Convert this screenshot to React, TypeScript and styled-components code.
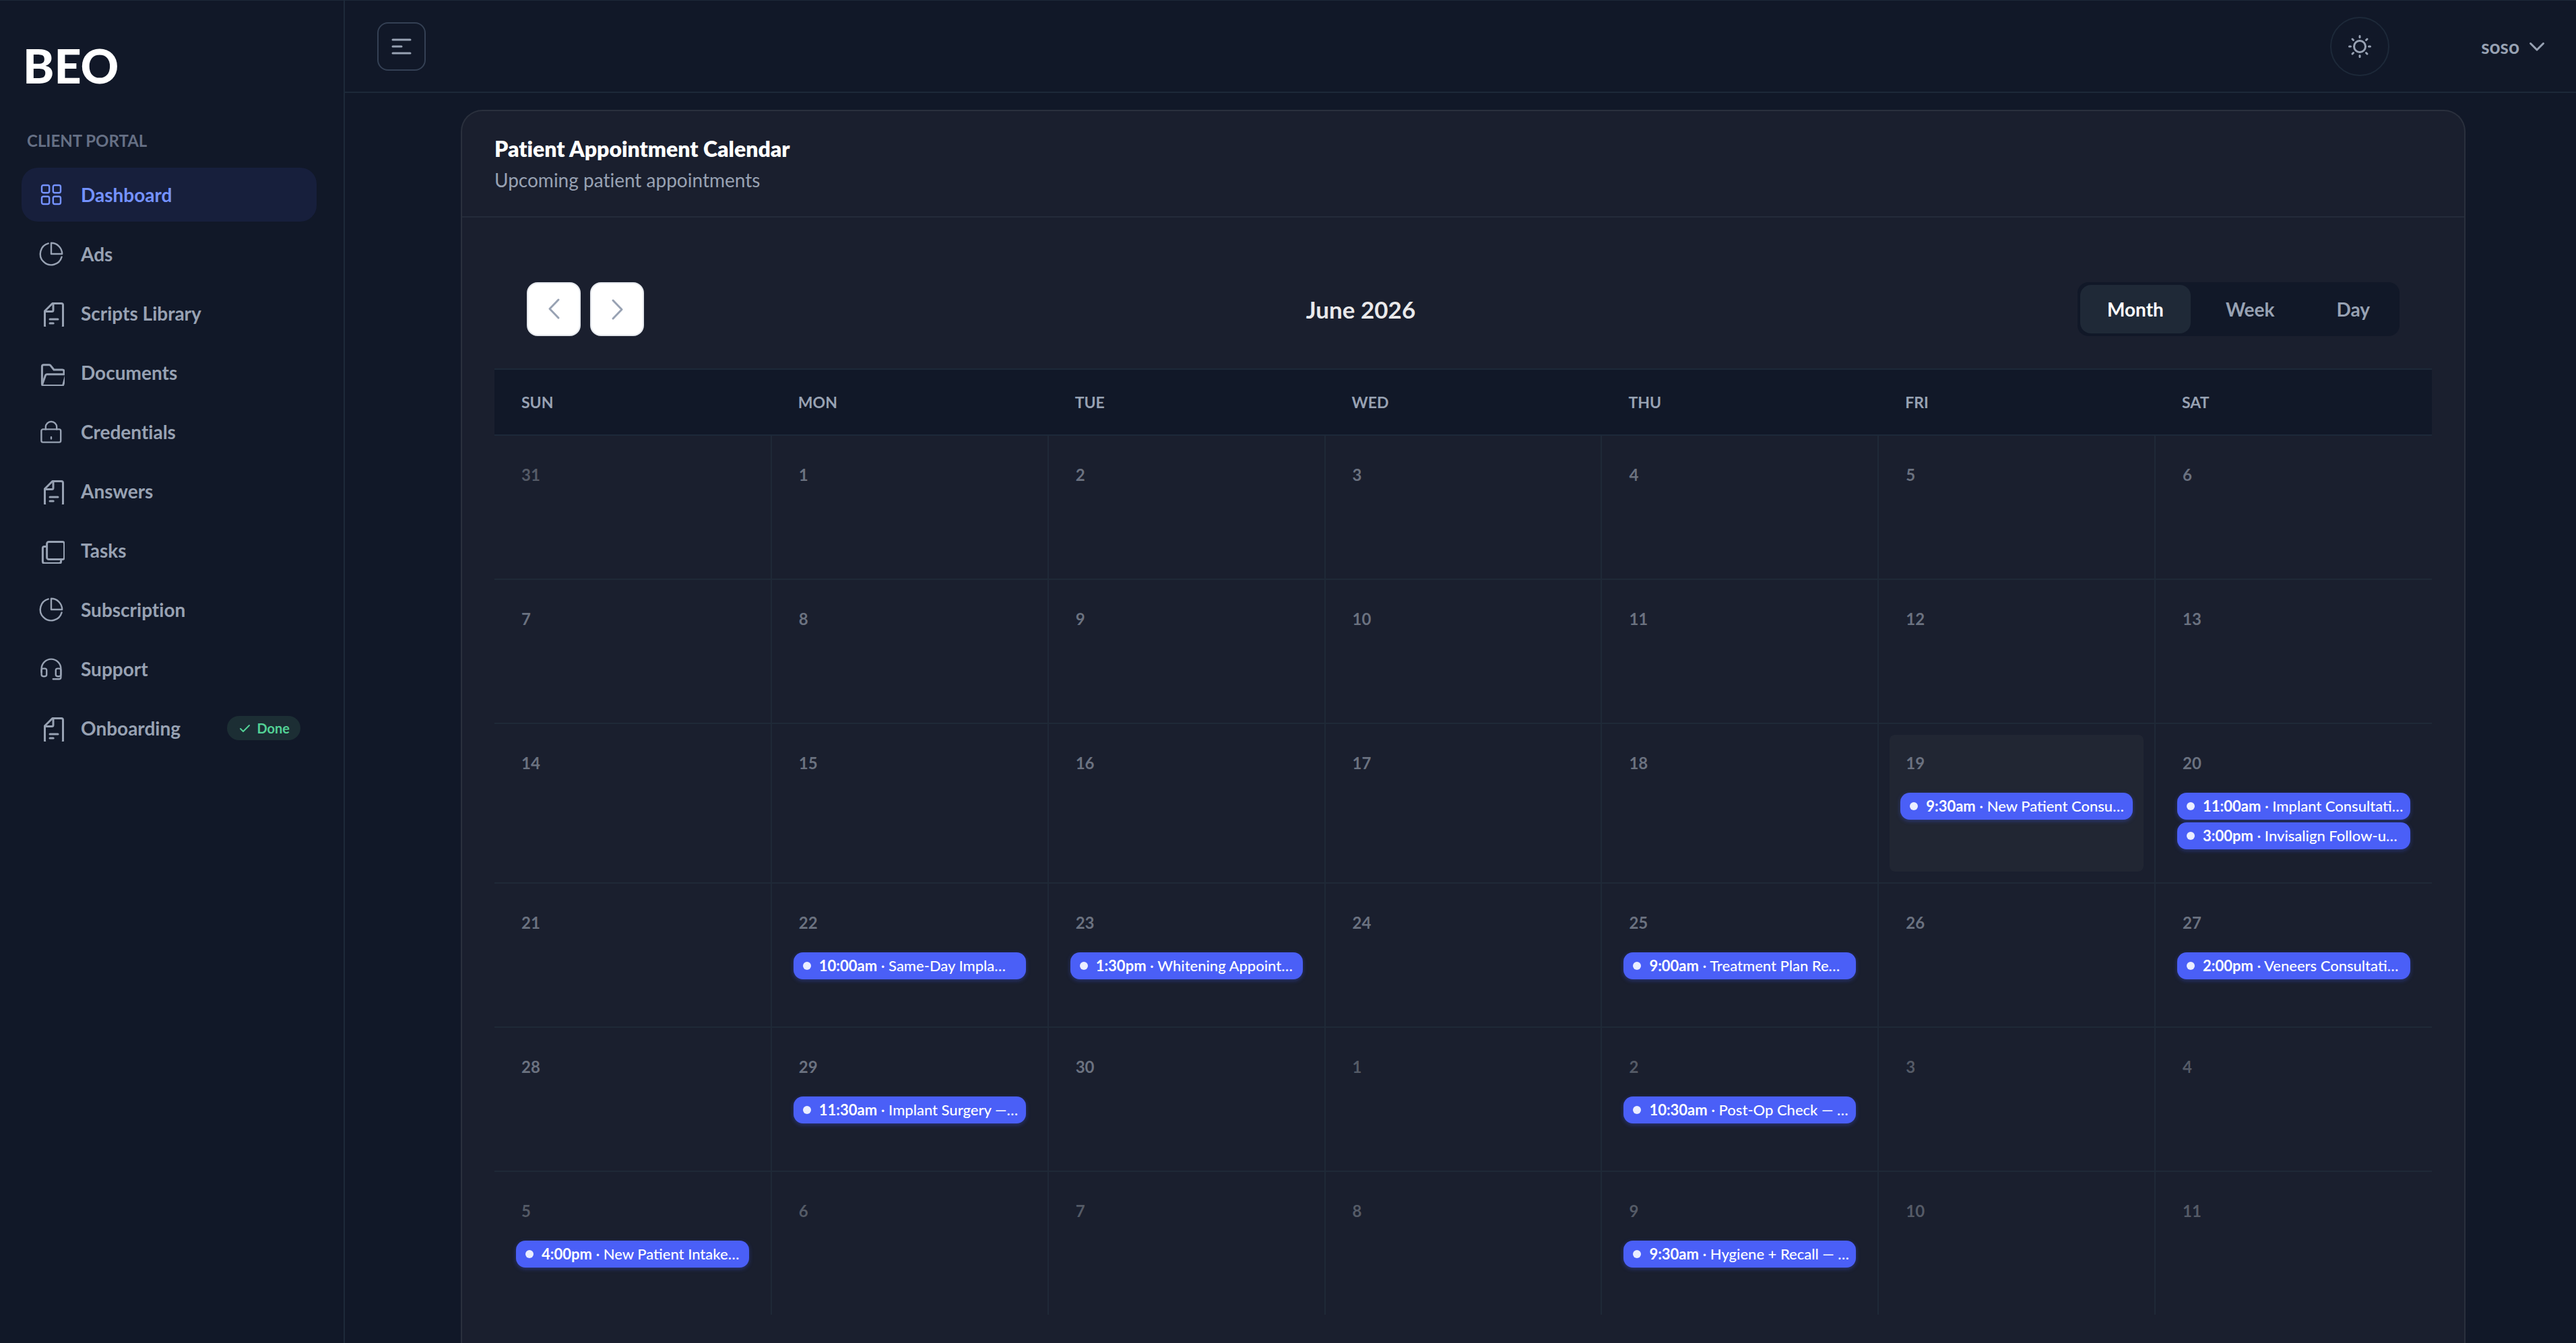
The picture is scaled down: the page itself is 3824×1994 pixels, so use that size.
import React from 'react';
import styled, { createGlobalStyle } from 'styled-components';

const Global = createGlobalStyle`
  * { box-sizing: border-box; }
  body {
    margin: 0;
    background: #111828;
    color: #98a2b3;
    font-family: Lato, "Liberation Sans", sans-serif;
    font-variant-ligatures: none;
  }
  button { font-family: inherit; }
`;

const Shell = styled.div`
  display: flex;
  min-height: 100vh;
  border-top: 1px solid #1d2939;
`;

const Sidebar = styled.aside`
  flex: 0 0 512px;
  border-right: 2px solid #1d2939;
  padding: 50px 40px 48px 32px;
`;

const Logo = styled.div`
  padding-left: 2px;
  color: #fff;
  font-size: 70px;
  line-height: 92px;
  font-weight: 900;
`;

const NavHeading = styled.h2`
  margin: 46px 0 20px 8px;
  color: #667085;
  font-size: 24px;
  line-height: 40px;
  font-weight: 700;
  text-transform: uppercase;
`;

const NavList = styled.ul`
  list-style: none;
  margin: 0;
  padding: 0;
  display: flex;
  flex-direction: column;
  gap: 8px;
`;

const NavLink = styled.a<{ $active?: boolean }>`
  display: flex;
  align-items: center;
  gap: 24px;
  height: 80px;
  padding: 0 24px;
  border-radius: 24px;
  color: ${(p) => (p.$active ? '#7592ff' : '#98a2b3')};
  background: ${(p) => (p.$active ? '#171f3c' : 'transparent')};
  font-size: 28px;
  line-height: 40px;
  font-weight: 700;
  text-decoration: none;
`;

const NavText = styled.span`
  flex: 1;
`;

const Badge = styled.span`
  display: flex;
  align-items: center;
  gap: 8px;
  height: 36px;
  padding: 0 16px;
  border-radius: 18px;
  background: #1c2e34;
  color: #53d296;
  font-size: 20px;
  font-weight: 700;
`;

const Icon = styled.svg`
  width: 40px;
  height: 40px;
  flex: none;
  overflow: hidden;
  fill: none;
  stroke: currentColor;
  stroke-width: 1.2;
  stroke-linecap: round;
  stroke-linejoin: round;
`;

const Page = styled.div`
  flex: 1;
  min-width: 0;
  display: flex;
  flex-direction: column;
`;

const TopBar = styled.header`
  display: flex;
  align-items: center;
  justify-content: space-between;
  height: 137px;
  padding: 0 40px 0 48px;
  border-bottom: 2px solid #1d2939;
`;

const MenuButton = styled.button`
  display: grid;
  place-items: center;
  width: 72px;
  height: 72px;
  padding: 0;
  border: 2px solid #344054;
  border-radius: 16px;
  background: transparent;
  color: #98a2b3;
`;

const TopActions = styled.div`
  display: flex;
  align-items: center;
  gap: 136px;
`;

const RoundButton = styled(MenuButton)`
  width: 88px;
  height: 88px;
  border-color: #1d2939;
  border-radius: 50%;
`;

const UserButton = styled.button`
  display: flex;
  align-items: center;
  gap: 8px;
  padding: 0;
  border: 0;
  background: transparent;
  color: #98a2b3;
  font-size: 28px;
  line-height: 40px;
  font-weight: 700;
`;

const Main = styled.main`
  width: 100%;
  max-width: 3080px;
  margin: 0 auto;
  padding: 25px 48px 0 56px;
  flex: 1;
  display: flex;
`;

const Card = styled.section`
  flex: 1;
  min-width: 0;
  border: 2px solid #2a303d;
  border-bottom: 0;
  border-radius: 32px 32px 0 0;
  background: #1a1f2e;
`;

const CardHead = styled.div`
  padding: 34px 48px;
  border-bottom: 2px solid #242b3a;
`;

const CardTitle = styled.h1`
  margin: 0;
  color: #fff;
  font-size: 32px;
  line-height: 44px;
  font-weight: 800;
`;

const CardNote = styled.p`
  margin: 4px 0 0;
  font-size: 28px;
  line-height: 40px;
`;

const CardBody = styled.div`
  padding: 48px 48px 36px;
`;

const Toolbar = styled.div`
  display: flex;
  justify-content: space-between;
  align-items: center;
  padding: 48px;
`;

const Pager = styled.div`
  display: flex;
  gap: 14px;
`;

const PagerButton = styled.button`
  display: grid;
  place-items: center;
  width: 80px;
  height: 80px;
  padding: 0;
  border: 2px solid #e4e7ec;
  border-radius: 16px;
  background: #fff;
  color: #98a2b3;
`;

const MonthTitle = styled.h2`
  margin: 0;
  color: #e9e9eb;
  font-size: 35px;
  line-height: 48px;
  font-weight: 700;
`;

const Segments = styled.div`
  display: flex;
  gap: 12px;
  padding: 4px;
  border-radius: 16px;
  background: #111828;
`;

const Segment = styled.button<{ $active?: boolean }>`
  height: 72px;
  padding: 0 40px;
  border: 0;
  border-radius: 16px;
  background: ${(p) => (p.$active ? '#1f2937' : 'transparent')};
  color: ${(p) => (p.$active ? '#fff' : '#98a2b3')};
  font-size: 28px;
  font-weight: 700;
`;

const Calendar = styled.table`
  width: 100%;
  table-layout: fixed;
  border-collapse: collapse;
`;

const DayName = styled.th`
  height: 98px;
  padding: 0 40px;
  border-top: 2px solid #1d2939;
  border-bottom: 2px solid #1d2939;
  background: #111828;
  text-align: left;
  text-transform: uppercase;
  font-size: 23px;
  font-weight: 700;
`;

const DayCell = styled.td`
  padding: 16px;
  vertical-align: top;
  border-top: 2px solid #1f2937;
  & + & { border-left: 2px solid #1f2937; }
`;

const DayBox = styled.div<{ $today?: boolean }>`
  display: flex;
  flex-direction: column;
  gap: 4px;
  min-height: ${(p) => (p.$today ? 203 : 180)}px;
  padding: 26px 16px 24px;
  border-radius: 8px;
  background: ${(p) => (p.$today ? '#212633' : 'transparent')};
`;

const DayNumber = styled.time<{ $muted?: boolean }>`
  margin-bottom: 24px;
  padding-left: 8px;
  font-size: 24px;
  line-height: 32px;
  font-weight: 700;
  color: ${(p) => (p.$muted ? '#555b67' : '#6b7280')};
`;

const Event = styled.button`
  display: flex;
  align-items: center;
  gap: 12px;
  height: 40px;
  padding: 0 14px;
  border: 0;
  border-radius: 14px;
  background: #4a5ff7;
  box-shadow: 0 2px 6px rgba(70, 95, 255, 0.35);
  color: #fff;
  font-size: 22px;
  line-height: 32px;
  font-weight: 500;
  white-space: nowrap;
  overflow: hidden;
`;

const EventTime = styled.b`
  font-weight: 700;
`;

const Dot = styled.span`
  flex: none;
  width: 12px;
  height: 12px;
  border-radius: 50%;
  background: #ebeeff;
`;

const icons = {
  grid: (
    <>
      <rect x="3" y="3" width="5.6" height="5.6" rx="1.2" />
      <rect x="11.4" y="3" width="5.6" height="5.6" rx="1.2" />
      <rect x="3" y="11.4" width="5.6" height="5.6" rx="1.2" />
      <rect x="11.4" y="11.4" width="5.6" height="5.6" rx="1.2" />
    </>
  ),
  pie: (
    <>
      <path d="M7.9 2.2A8.1 8.1 0 1 0 17.8 12.2" />
      <path d="M10 1.9A8.1 8.1 0 0 1 18.1 10H10Z" />
    </>
  ),
  doc: (
    <g strokeWidth="1.5">
      <path d="M5.25 8.4 10.9 2.75h6.6c.7 0 1.25.55 1.25 1.25v15.25a2 2 0 0 1-2 2h-9.5a2 2 0 0 1-2-2Z" />
      <path d="M5.4 8.8h5.1c.6 0 1-.4 1-1V2.9M9 14.5h6M9 17.5h2.6" />
    </g>
  ),
  folder: (
    <g strokeWidth="1.5">
      <path d="M3.2 18.5V5.6c0-.7.5-1.2 1.2-1.2h4.2c.4 0 .8.2 1 .5L12 8h6.3c.7 0 1.2.5 1.2 1.2v2" />
      <path d="M3.4 18.8 5.7 12.2c.2-.5.6-.8 1.1-.8H21l-2 7.5c-.1.5-.6.9-1.1.9H4.2c-.5 0-1-.4-.8-1Z" />
    </g>
  ),
  lock: (
    <>
      <rect x="2.7" y="8.2" width="14.4" height="9.6" rx="1.2" />
      <path d="M5.9 8.2V6.6a4.1 4.1 0 0 1 8.2 0v1.6M10 14v1.2" />
    </>
  ),
  copy: (
    <g strokeWidth="1.5">
      <rect x="6.8" y="3.8" width="13" height="13" rx="1.4" />
      <path d="M6.5 7.2H5c-.8 0-1.3.5-1.3 1.3v9.8c0 .8.5 1.3 1.3 1.3h11c.8 0 1.3-.5 1.3-1.3V17" />
    </g>
  ),
  headset: (
    <>
      <path d="M2.8 12.5V10a7.2 7.2 0 0 1 14.4 0v6.2c0 .9-.5 1.4-1.4 1.4h-4.4" />
      <rect x="2.8" y="9.8" width="3.8" height="5.8" rx="1.3" />
      <rect x="13.4" y="9.8" width="3.8" height="5.8" rx="1.3" />
    </>
  ),
};

type IconName = keyof typeof icons;

const nav: { label: string; icon: IconName; active?: boolean; done?: boolean }[] = [
  { label: 'Dashboard', icon: 'grid', active: true },
  { label: 'Ads', icon: 'pie' },
  { label: 'Scripts Library', icon: 'doc' },
  { label: 'Documents', icon: 'folder' },
  { label: 'Credentials', icon: 'lock' },
  { label: 'Answers', icon: 'doc' },
  { label: 'Tasks', icon: 'copy' },
  { label: 'Subscription', icon: 'pie' },
  { label: 'Support', icon: 'headset' },
  { label: 'Onboarding', icon: 'doc', done: true },
];

const dayNames = ['Sun', 'Mon', 'Tue', 'Wed', 'Thu', 'Fri', 'Sat'];

const events: Record<string, [string, string][]> = {
  '2026-06-19': [['9:30am', 'New Patient Consu…']],
  '2026-06-20': [['11:00am', 'Implant Consultati…'], ['3:00pm', 'Invisalign Follow-u…']],
  '2026-06-22': [['10:00am', 'Same-Day Impla…']],
  '2026-06-23': [['1:30pm', 'Whitening Appoint…']],
  '2026-06-25': [['9:00am', 'Treatment Plan Re…']],
  '2026-06-27': [['2:00pm', 'Veneers Consultati…']],
  '2026-06-29': [['11:30am', 'Implant Surgery —…']],
  '2026-07-02': [['10:30am', 'Post-Op Check — …']],
  '2026-07-05': [['4:00pm', 'New Patient Intake…']],
  '2026-07-09': [['9:30am', 'Hygiene + Recall — …']],
};

const today = '2026-06-19';

const weeks = Array.from({ length: 6 }, (_, w) =>
  Array.from({ length: 7 }, (_, d) => {
    const date = new Date(Date.UTC(2026, 4, 31 + w * 7 + d));
    return { key: date.toISOString().slice(0, 10), day: date.getUTCDate(), muted: date.getUTCMonth() !== 5 };
  }),
);

export default function App() {
  return (
    <>
      <Global />
      <Shell>
        <Sidebar>
          <Logo>BEO</Logo>
          <nav aria-label="Client portal">
            <NavHeading>Client Portal</NavHeading>
            <NavList>
              {nav.map((item) => (
                <li key={item.label}>
                  <NavLink href="#" $active={item.active}>
                    <Icon viewBox="0 0 20 20">{icons[item.icon]}</Icon>
                    <NavText>{item.label}</NavText>
                    {item.done && (
                      <Badge>
                        <svg width="20" height="20" viewBox="0 0 20 20" fill="none" stroke="currentColor" strokeWidth="2" strokeLinecap="round" strokeLinejoin="round">
                          <path d="M4 11l4 4 9-9" />
                        </svg>
                        Done
                      </Badge>
                    )}
                  </NavLink>
                </li>
              ))}
            </NavList>
          </nav>
        </Sidebar>
        <Page>
          <TopBar>
            <MenuButton aria-label="Toggle sidebar">
              <svg width="32" height="24" viewBox="0 0 32 24" stroke="currentColor" strokeWidth="3" strokeLinecap="round">
                <path d="M3 2h26M3 12h13M3 22h26" />
              </svg>
            </MenuButton>
            <TopActions>
              <RoundButton aria-label="Toggle theme">
                <svg width="36" height="36" viewBox="0 0 36 36" fill="none" stroke="currentColor" strokeWidth="3" strokeLinecap="round">
                  <circle cx="18" cy="18" r="8.5" />
                  <path d="M18 2.5v2M18 31.5v2M2.5 18h2M31.5 18h2M7 7l1.5 1.5M27.5 27.5l1.5 1.5M29 7l-1.5 1.5M8.5 27.5L7 29" />
                </svg>
              </RoundButton>
              <UserButton>
                soso
                <svg width="36" height="40" viewBox="0 0 36 40" fill="none" stroke="currentColor" strokeWidth="3" strokeLinecap="round" strokeLinejoin="round">
                  <path d="M8.5 15.5l9.5 9.5 9.5-9.5" />
                </svg>
              </UserButton>
            </TopActions>
          </TopBar>
          <Main>
            <Card>
              <CardHead>
                <CardTitle>Patient Appointment Calendar</CardTitle>
                <CardNote>Upcoming patient appointments</CardNote>
              </CardHead>
              <CardBody>
                <Toolbar>
                  <Pager>
                    <PagerButton aria-label="Previous month">
                      <svg width="40" height="40" viewBox="0 0 40 40" fill="none" stroke="currentColor" strokeWidth="3" strokeLinecap="round" strokeLinejoin="round">
                        <path d="M27 6L14 19.5 27 33" />
                      </svg>
                    </PagerButton>
                    <PagerButton aria-label="Next month">
                      <svg width="40" height="40" viewBox="0 0 40 40" fill="none" stroke="currentColor" strokeWidth="3" strokeLinecap="round" strokeLinejoin="round">
                        <path d="M14 7l13 13.5L14 34" />
                      </svg>
                    </PagerButton>
                  </Pager>
                  <MonthTitle>June 2026</MonthTitle>
                  <Segments>
                    <Segment $active>Month</Segment>
                    <Segment>Week</Segment>
                    <Segment>Day</Segment>
                  </Segments>
                </Toolbar>
                <Calendar>
                  <thead>
                    <tr>
                      {dayNames.map((name) => (
                        <DayName key={name} scope="col">{name}</DayName>
                      ))}
                    </tr>
                  </thead>
                  <tbody>
                    {weeks.map((week) => (
                      <tr key={week[0].key}>
                        {week.map(({ key, day, muted }) => (
                          <DayCell key={key}>
                            <DayBox $today={key === today}>
                              <DayNumber dateTime={key} $muted={muted}>{day}</DayNumber>
                              {(events[key] ?? []).map(([time, title]) => (
                                <Event key={time}>
                                  <Dot />
                                  <span><EventTime>{time}</EventTime> · {title}</span>
                                </Event>
                              ))}
                            </DayBox>
                          </DayCell>
                        ))}
                      </tr>
                    ))}
                  </tbody>
                </Calendar>
              </CardBody>
            </Card>
          </Main>
        </Page>
      </Shell>
    </>
  );
}
